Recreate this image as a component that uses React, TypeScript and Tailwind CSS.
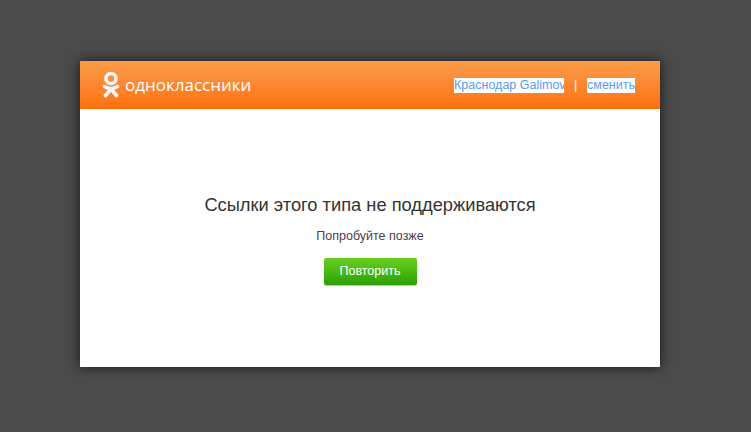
import React from 'react'

const Logo = () => (
  <svg width="18" height="28" viewBox="0 0 18 28" fill="none" className="shrink-0">
    <circle cx="9" cy="7.5" r="5" stroke="#eef6fa" strokeWidth="3.6" />
    <path d="M2.5 15.5C6.5 18 11.5 18 15.5 15.5" stroke="#eef6fa" strokeWidth="3.6" strokeLinecap="round" />
    <path d="M9 18L3.5 24.5M9 18L14.5 24.5" stroke="#eef6fa" strokeWidth="3.8" strokeLinecap="round" />
  </svg>
)

export default function App() {
  return (
    <div className="w-[751px] h-[432px] bg-[#4b4b4b] pt-[61px] pl-[80px] font-['Liberation_Sans',sans-serif] overflow-hidden">
      <div className="w-[580px] h-[306px] bg-white shadow-[0_0_12px_rgba(0,0,0,0.7)] flex flex-col">
        <div className="h-[48px] bg-gradient-to-b from-[#fa9c48] to-[#ff7004] flex items-center pl-[22px] pr-[25px]">
          <Logo />
          <span className="ml-[5px] text-white text-[17px] font-['Open_Sans',sans-serif] leading-none -mt-[1px]">одноклассники</span>
          <div className="ml-auto flex items-center text-[12.5px] leading-[15px] mt-[1px]">
            <a className="block w-[110px] overflow-hidden whitespace-nowrap bg-white text-[#5b9bf0]">Краснодар Galimov</a>
            <span className="w-[23px] text-center text-white">|</span>
            <a className="block bg-white text-[#5b9bf0] whitespace-nowrap">сменить</a>
          </div>
        </div>
        <div className="flex-1 flex flex-col items-center pt-[85px]">
          <h1 className="text-[18.3px] leading-[22px] text-[#333333]">Ссылки этого типа не поддерживаются</h1>
          <p className="mt-[13px] text-[12.5px] leading-[14px] text-[#4a4050]">Попробуйте позже</p>
          <button className="mt-[15px] w-[93px] h-[27px] rounded-[2px] bg-gradient-to-b from-[#68d01e] to-[#2a9f03] text-white text-[12.5px] shadow-[0_1px_1px_rgba(0,0,0,0.25)]">
            Повторить
          </button>
        </div>
      </div>
    </div>
  )
}
